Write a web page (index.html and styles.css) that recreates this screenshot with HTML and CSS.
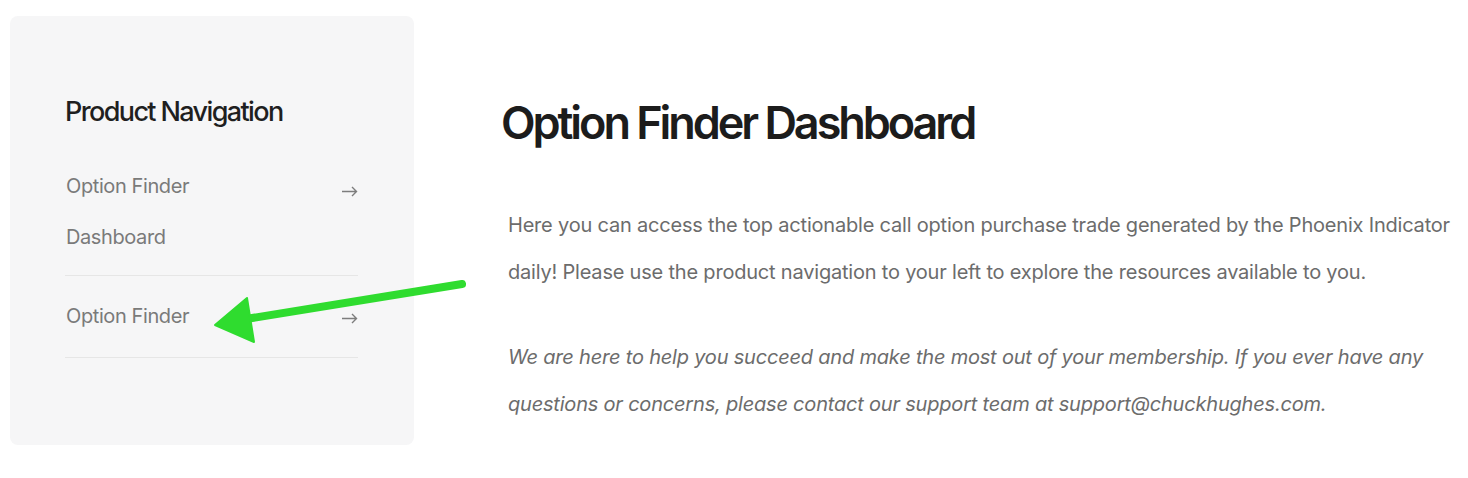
FILE: index.html
```html
<!DOCTYPE html>
<html lang="en">
<head>
  <meta charset="UTF-8">
  <meta name="viewport" content="width=device-width, initial-scale=1">
  <title>Option Finder Dashboard</title>
  <link rel="stylesheet" href="styles.css">
</head>
<body>
  <div class="page">
    <aside class="sidebar">
      <h3>Product Navigation</h3>
      <ul class="nav">
        <li>
          <a href="#">Option Finder Dashboard</a>
          <svg class="go" width="17" height="11" viewBox="0 0 17 11"><path d="M1 5.5h14.5M11 1l4.5 4.5L11 10" fill="none" stroke="#7d7d7d" stroke-width="1.4"/></svg>
        </li>
        <li>
          <a href="#">Option Finder</a>
          <svg class="go" width="17" height="11" viewBox="0 0 17 11"><path d="M1 5.5h14.5M11 1l4.5 4.5L11 10" fill="none" stroke="#7d7d7d" stroke-width="1.4"/></svg>
        </li>
      </ul>
    </aside>

    <main class="content">
      <h1>Option Finder Dashboard</h1>
      <p>Here you can access the top actionable call option purchase trade generated by the Phoenix Indicator daily! Please use the product navigation to your left to explore the resources available to you.</p>
      <p class="note">We are here to help you succeed and make the most out of your membership. If you ever have any questions or concerns, please contact our support team at support@chuckhughes.com.</p>
    </main>

    <!-- green annotation arrow drawn over the page -->
    <svg class="pointer" width="1468" height="478" viewBox="0 0 1468 478">
      <line x1="462" y1="284" x2="246" y2="319" stroke="#2fdc2f" stroke-width="8" stroke-linecap="round"/>
      <polygon points="215,325 247,298 254,342" fill="#2fdc2f" stroke="#2fdc2f" stroke-width="2" stroke-linejoin="round"/>
    </svg>
  </div>
</body>
</html>
```

FILE: styles.css
```css
body {
  font-family: Inter, 'Liberation Sans', Arial, sans-serif;
  background-color: #fff;
  margin: 0;
  padding: 0;
  color: #222;
}

.page {
  position: relative;
  display: flex;
  align-items: flex-start;
  gap: 88px;
  padding: 16px 14px 0 10px;
}

.sidebar {
  flex: 0 0 404px;
  height: 429px;
  box-sizing: border-box;
  padding: 80px 56px 0 55px;
  background-color: #f6f6f7;
  border-radius: 8px;
}

.sidebar h3 {
  margin: 0 0 18px 0;
  font-size: 27px;
  line-height: 1.2;
  font-weight: 500;
  letter-spacing: -0.06em;
  color: #1f1f1f;
}

.nav {
  list-style: none;
  margin: 0;
  padding: 0;
}

.nav li {
  display: flex;
  justify-content: space-between;
  align-items: flex-start;
  padding: 15px 0 15px 1px;
  border-bottom: 1px solid #e6e6e6;
}

.nav li:first-child {
  padding-bottom: 12px;
}

.nav a {
  width: 150px;
  font-size: 20px;
  line-height: 51px;
  color: #7a7a7a;
  text-decoration: none;
  letter-spacing: -0.02em;
}

.nav .go {
  margin: 22px 0 0 0;
}

.nav li:first-child .go {
  margin-top: 25px;
}

.content {
  flex: 1;
  padding-top: 80px;
}

.content h1 {
  margin: 0 0 52px -1px;
  font-size: 45px;
  line-height: 1.2;
  font-weight: 600;
  letter-spacing: -0.068em;
  color: #1c1c1c;
}

.content p {
  margin: 0 0 38px 6px;
  font-size: 20px;
  line-height: 47px;
  color: #6c6c6c;
  letter-spacing: -0.01em;
}

.content .note {
  font-style: italic;
}

.pointer {
  position: absolute;
  top: 0;
  left: 0;
  pointer-events: none;
}
```
